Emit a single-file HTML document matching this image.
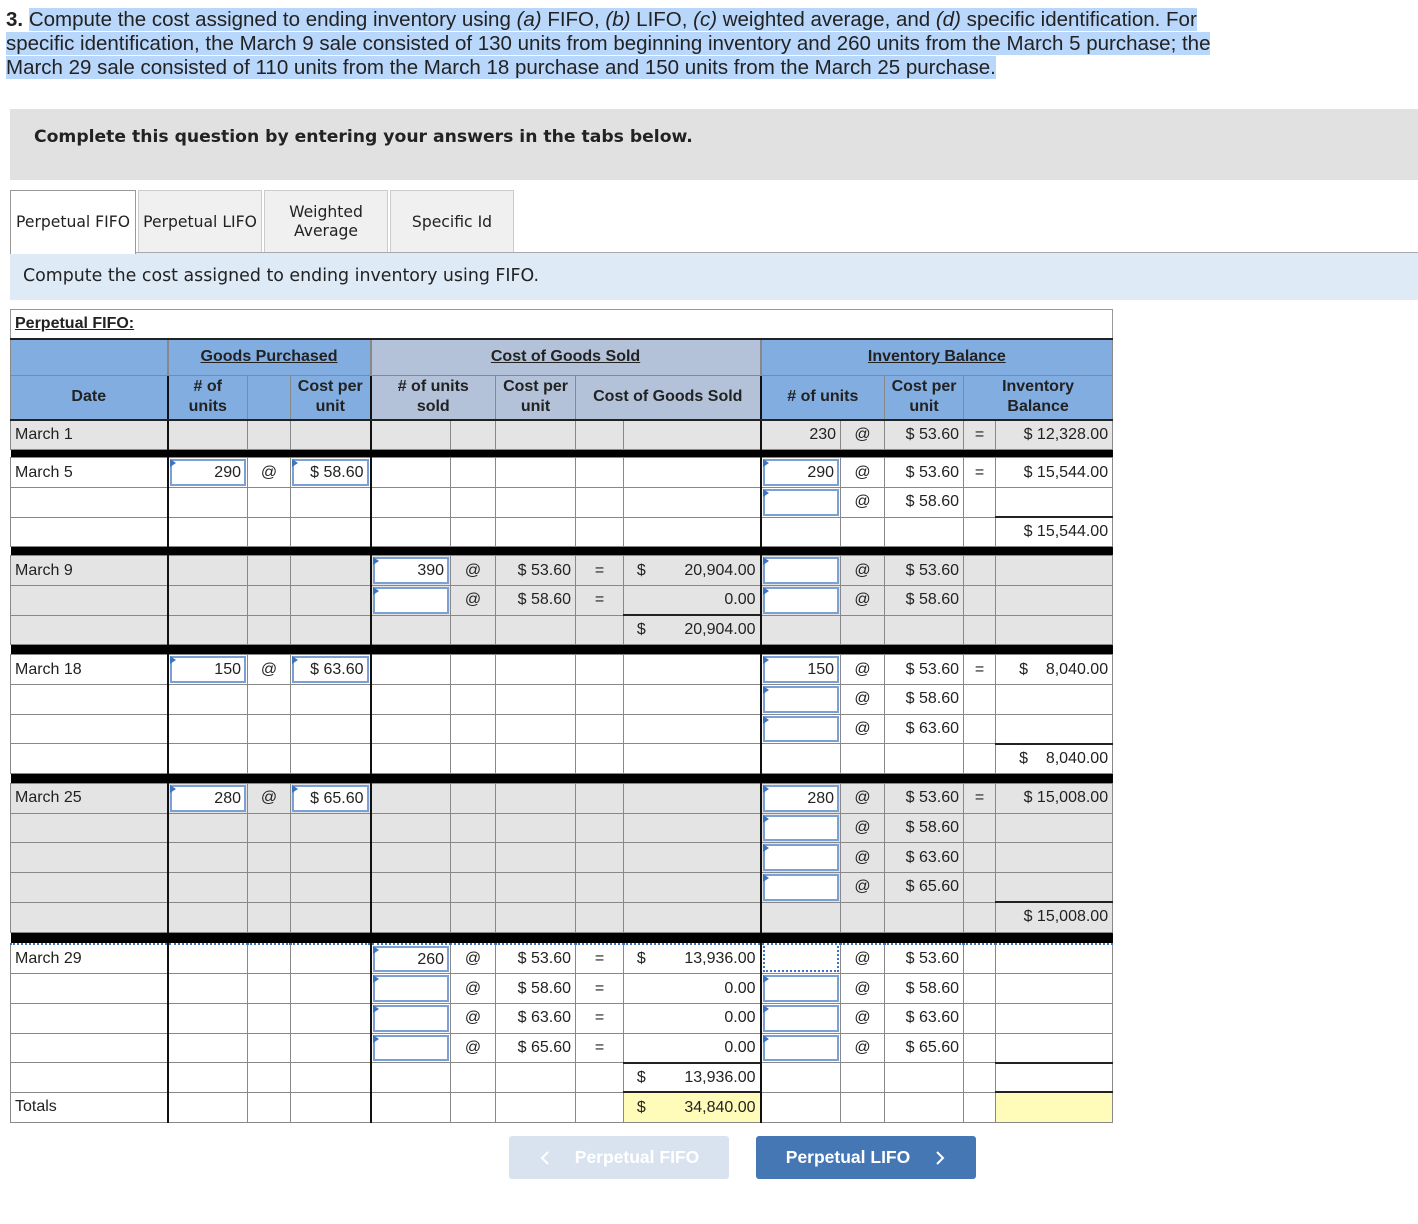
<!DOCTYPE html>
<html><head><meta charset="utf-8"><style>
*{box-sizing:border-box;margin:0;padding:0}
body{width:1418px;height:1224px;background:#fff;font-family:"Liberation Sans",Arial,sans-serif;color:#222;position:relative;overflow:hidden}
.q{position:absolute;left:6px;top:8px;width:1400px;font-size:20.5px;line-height:24px;white-space:nowrap}
.q span.h{background:#b9d6fb}
.banner{position:absolute;left:10px;top:109px;width:1408px;height:71px;background:#e1e1e1}
.banner b{position:absolute;left:24px;top:18px;font-family:"DejaVu Sans",Verdana,sans-serif;font-size:17.2px}
.tab{position:absolute;top:190px;height:63px;border:1px solid #ccc;border-bottom:none;background:#f0f0f0;font-family:"DejaVu Sans",Verdana,sans-serif;font-size:15.6px;display:flex;align-items:center;justify-content:center;text-align:center;line-height:19px;white-space:nowrap}
.tab.a{background:#fff;border-color:#999;z-index:2;height:64px}
.tline{position:absolute;left:10px;top:252px;width:1408px;height:1px;background:#aaa}
.band{position:absolute;left:10px;top:253px;width:1408px;height:47px;background:#dfeaf7;font-family:"DejaVu Sans",Verdana,sans-serif;font-size:17.4px;padding:13px 0 0 13px}
.wrap{position:absolute;left:10px;top:309px;width:1103px;height:30px;border:1px solid #999;border-bottom:none}
.wrap u{position:absolute;left:4px;top:5px;font-weight:bold;font-size:16px}
table{position:absolute;left:10px;top:338px;width:1103px;border-collapse:collapse;table-layout:fixed;font-size:16px}
td{border:1px solid #888;height:29.7px;padding:0 4px;white-space:nowrap;position:relative;text-align:right}
td.l{text-align:left}
td.c{text-align:center;padding:0}
tr.h1 td{height:36px;background:#82ade0;font-weight:bold;text-align:center;border-color:#888;border-top:2px solid #222}
tr.h1 td.cg,tr.h2 td.cg{background:#b3c2d9}
tr.h2 td{height:45px;background:#82ade0;font-weight:bold;text-align:center;line-height:20px;border-bottom:2px solid #222}
tr.g td{background:#e4e4e4}
tr.s td{background:#000;border:none;padding:0}
td.bl{border-left:2px solid #111}
td.tp{border-top:2px solid #222}
.d{float:left}
.b{position:absolute;left:1px;top:1px;right:1px;bottom:1px;border:2px solid #7aa0d6;background:#fff;text-align:right;padding-right:3px;line-height:24px}
.b:before{content:"";position:absolute;left:-2px;top:-2px;border-left:6px solid #3d74c0;border-top:4px solid transparent;border-bottom:4px solid transparent}
.b.dot{border:2px dotted #3d74c0;border-top:none}
.b.dot:before{display:none}
.y{background:#fffbb9 !important}
.btn{position:absolute;top:1136px;width:220px;height:43px;border-radius:3px;color:#fff;font-weight:bold;font-size:17.5px;display:flex;align-items:center;justify-content:center}
.btn svg{width:12px;height:16px}
</style></head><body>
<div class="q"><b>3.</b> <span class="h">Compute the cost assigned to ending inventory using <i>(a)</i> FIFO, <i>(b)</i> LIFO, <i>(c)</i> weighted average, and <i>(d)</i> specific identification. For </span><br><span class="h">specific identification, the March 9 sale consisted of 130 units from beginning inventory and 260 units from the March 5 purchase; the </span><br><span class="h">March 29 sale consisted of 110 units from the March 18 purchase and 150 units from the March 25 purchase.</span></div>
<div class="banner"><b>Complete this question by entering your answers in the tabs below.</b></div>
<div class="tab a" style="left:10px;width:126px">Perpetual FIFO</div>
<div class="tab" style="left:138px;width:124px">Perpetual LIFO</div>
<div class="tab" style="left:264px;width:124px">Weighted<br>Average</div>
<div class="tab" style="left:390px;width:124px">Specific Id</div>
<div class="tline"></div>
<div class="band">Compute the cost assigned to ending inventory using FIFO.</div>
<div class="wrap"><u>Perpetual FIFO:</u></div>
<table>
<colgroup><col style="width:157px"><col style="width:80px"><col style="width:43px"><col style="width:80px"><col style="width:80px"><col style="width:45px"><col style="width:80px"><col style="width:48px"><col style="width:137px"><col style="width:80px"><col style="width:44px"><col style="width:79px"><col style="width:32px"><col style="width:117px"></colgroup>
<tr class="h1"><td style="border-right:none"></td><td colspan="3" class="bl"><u>Goods Purchased</u></td><td colspan="5" class="cg bl"><u>Cost of Goods Sold</u></td><td colspan="5" class="bl"><u>Inventory Balance</u></td></tr>
<tr class="h2"><td>Date</td><td class="bl"># of<br>units</td><td></td><td>Cost per<br>unit</td><td colspan="2" class="cg bl"># of units<br>sold</td><td class="cg">Cost per<br>unit</td><td colspan="2" class="cg">Cost of Goods Sold</td><td colspan="2" class="bl"># of units</td><td>Cost per<br>unit</td><td colspan="2">Inventory<br>Balance</td></tr>

<tr class="g"><td class="l">March 1</td><td class="bl"></td><td></td><td></td><td class="bl"></td><td></td><td></td><td></td><td></td><td class="bl">230</td><td class="c">@</td><td>$ 53.60</td><td class="c">=</td><td>$ 12,328.00</td></tr>
<tr class="s"><td colspan="14" style="height:8px"></td></tr>

<tr><td class="l">March 5</td><td class="bl"><div class="b">290</div></td><td class="c">@</td><td><div class="b">$ 58.60</div></td><td class="bl"></td><td></td><td></td><td></td><td></td><td class="bl"><div class="b">290</div></td><td class="c">@</td><td>$ 53.60</td><td class="c">=</td><td>$ 15,544.00</td></tr>
<tr><td></td><td class="bl"></td><td></td><td></td><td class="bl"></td><td></td><td></td><td></td><td></td><td class="bl"><div class="b"></div></td><td class="c">@</td><td>$ 58.60</td><td></td><td></td></tr>
<tr><td></td><td class="bl"></td><td></td><td></td><td class="bl"></td><td></td><td></td><td></td><td></td><td class="bl"></td><td></td><td></td><td></td><td class="tp">$ 15,544.00</td></tr>
<tr class="s"><td colspan="14" style="height:9px"></td></tr>

<tr class="g"><td class="l">March 9</td><td class="bl"></td><td></td><td></td><td class="bl"><div class="b">390</div></td><td class="c">@</td><td>$ 53.60</td><td class="c">=</td><td><span class="d">&nbsp;&nbsp;$</span>20,904.00</td><td class="bl"><div class="b"></div></td><td class="c">@</td><td>$ 53.60</td><td></td><td></td></tr>
<tr class="g"><td></td><td class="bl"></td><td></td><td></td><td class="bl"><div class="b"></div></td><td class="c">@</td><td>$ 58.60</td><td class="c">=</td><td>0.00</td><td class="bl"><div class="b"></div></td><td class="c">@</td><td>$ 58.60</td><td></td><td></td></tr>
<tr class="g"><td></td><td class="bl"></td><td></td><td></td><td class="bl"></td><td></td><td></td><td></td><td class="tp"><span class="d">&nbsp;&nbsp;$</span>20,904.00</td><td class="bl"></td><td></td><td></td><td></td><td></td></tr>
<tr class="s"><td colspan="14" style="height:10px"></td></tr>

<tr><td class="l">March 18</td><td class="bl"><div class="b">150</div></td><td class="c">@</td><td><div class="b">$ 63.60</div></td><td class="bl"></td><td></td><td></td><td></td><td></td><td class="bl"><div class="b">150</div></td><td class="c">@</td><td>$ 53.60</td><td class="c">=</td><td>$&nbsp;&nbsp;&nbsp;&nbsp;8,040.00</td></tr>
<tr><td></td><td class="bl"></td><td></td><td></td><td class="bl"></td><td></td><td></td><td></td><td></td><td class="bl"><div class="b"></div></td><td class="c">@</td><td>$ 58.60</td><td></td><td></td></tr>
<tr><td></td><td class="bl"></td><td></td><td></td><td class="bl"></td><td></td><td></td><td></td><td></td><td class="bl"><div class="b"></div></td><td class="c">@</td><td>$ 63.60</td><td></td><td></td></tr>
<tr><td></td><td class="bl"></td><td></td><td></td><td class="bl"></td><td></td><td></td><td></td><td></td><td class="bl"></td><td></td><td></td><td></td><td class="tp">$&nbsp;&nbsp;&nbsp;&nbsp;8,040.00</td></tr>
<tr class="s"><td colspan="14" style="height:10px"></td></tr>

<tr class="g"><td class="l">March 25</td><td class="bl"><div class="b">280</div></td><td class="c">@</td><td><div class="b">$ 65.60</div></td><td class="bl"></td><td></td><td></td><td></td><td></td><td class="bl"><div class="b">280</div></td><td class="c">@</td><td>$ 53.60</td><td class="c">=</td><td>$ 15,008.00</td></tr>
<tr class="g"><td></td><td class="bl"></td><td></td><td></td><td class="bl"></td><td></td><td></td><td></td><td></td><td class="bl"><div class="b"></div></td><td class="c">@</td><td>$ 58.60</td><td></td><td></td></tr>
<tr class="g"><td></td><td class="bl"></td><td></td><td></td><td class="bl"></td><td></td><td></td><td></td><td></td><td class="bl"><div class="b"></div></td><td class="c">@</td><td>$ 63.60</td><td></td><td></td></tr>
<tr class="g"><td></td><td class="bl"></td><td></td><td></td><td class="bl"></td><td></td><td></td><td></td><td></td><td class="bl"><div class="b"></div></td><td class="c">@</td><td>$ 65.60</td><td></td><td></td></tr>
<tr class="g"><td></td><td class="bl"></td><td></td><td></td><td class="bl"></td><td></td><td></td><td></td><td></td><td class="bl"></td><td></td><td></td><td></td><td class="tp">$ 15,008.00</td></tr>
<tr class="s"><td colspan="14" style="height:12px;border-bottom:2px dotted #3d74c0"></td></tr>

<tr><td class="l">March 29</td><td class="bl"></td><td></td><td></td><td class="bl"><div class="b">260</div></td><td class="c">@</td><td>$ 53.60</td><td class="c">=</td><td><span class="d">&nbsp;&nbsp;$</span>13,936.00</td><td class="bl"><div class="b dot"></div></td><td class="c">@</td><td>$ 53.60</td><td></td><td></td></tr>
<tr><td></td><td class="bl"></td><td></td><td></td><td class="bl"><div class="b"></div></td><td class="c">@</td><td>$ 58.60</td><td class="c">=</td><td>0.00</td><td class="bl"><div class="b"></div></td><td class="c">@</td><td>$ 58.60</td><td></td><td></td></tr>
<tr><td></td><td class="bl"></td><td></td><td></td><td class="bl"><div class="b"></div></td><td class="c">@</td><td>$ 63.60</td><td class="c">=</td><td>0.00</td><td class="bl"><div class="b"></div></td><td class="c">@</td><td>$ 63.60</td><td></td><td></td></tr>
<tr><td></td><td class="bl"></td><td></td><td></td><td class="bl"><div class="b"></div></td><td class="c">@</td><td>$ 65.60</td><td class="c">=</td><td>0.00</td><td class="bl"><div class="b"></div></td><td class="c">@</td><td>$ 65.60</td><td></td><td></td></tr>
<tr><td></td><td class="bl"></td><td></td><td></td><td class="bl"></td><td></td><td></td><td></td><td class="tp"><span class="d">&nbsp;&nbsp;$</span>13,936.00</td><td class="bl"></td><td></td><td></td><td></td><td class="tp"></td></tr>
<tr><td class="l">Totals</td><td class="bl"></td><td></td><td></td><td class="bl"></td><td></td><td></td><td></td><td class="y tp"><span class="d">&nbsp;&nbsp;$</span>34,840.00</td><td class="bl"></td><td></td><td></td><td></td><td class="y tp"></td></tr>
</table>
<div class="btn" style="left:509px;background:#d9e3f0"><svg viewBox="0 0 12 16" style="margin-right:24px"><path d="M9 2 L3 8 L9 14" fill="none" stroke="#fff" stroke-width="2"/></svg>Perpetual FIFO</div>
<div class="btn" style="left:756px;background:#4677b5">Perpetual LIFO<svg viewBox="0 0 12 16" style="margin-left:24px"><path d="M3 2 L9 8 L3 14" fill="none" stroke="#fff" stroke-width="2"/></svg></div>
</body></html>
